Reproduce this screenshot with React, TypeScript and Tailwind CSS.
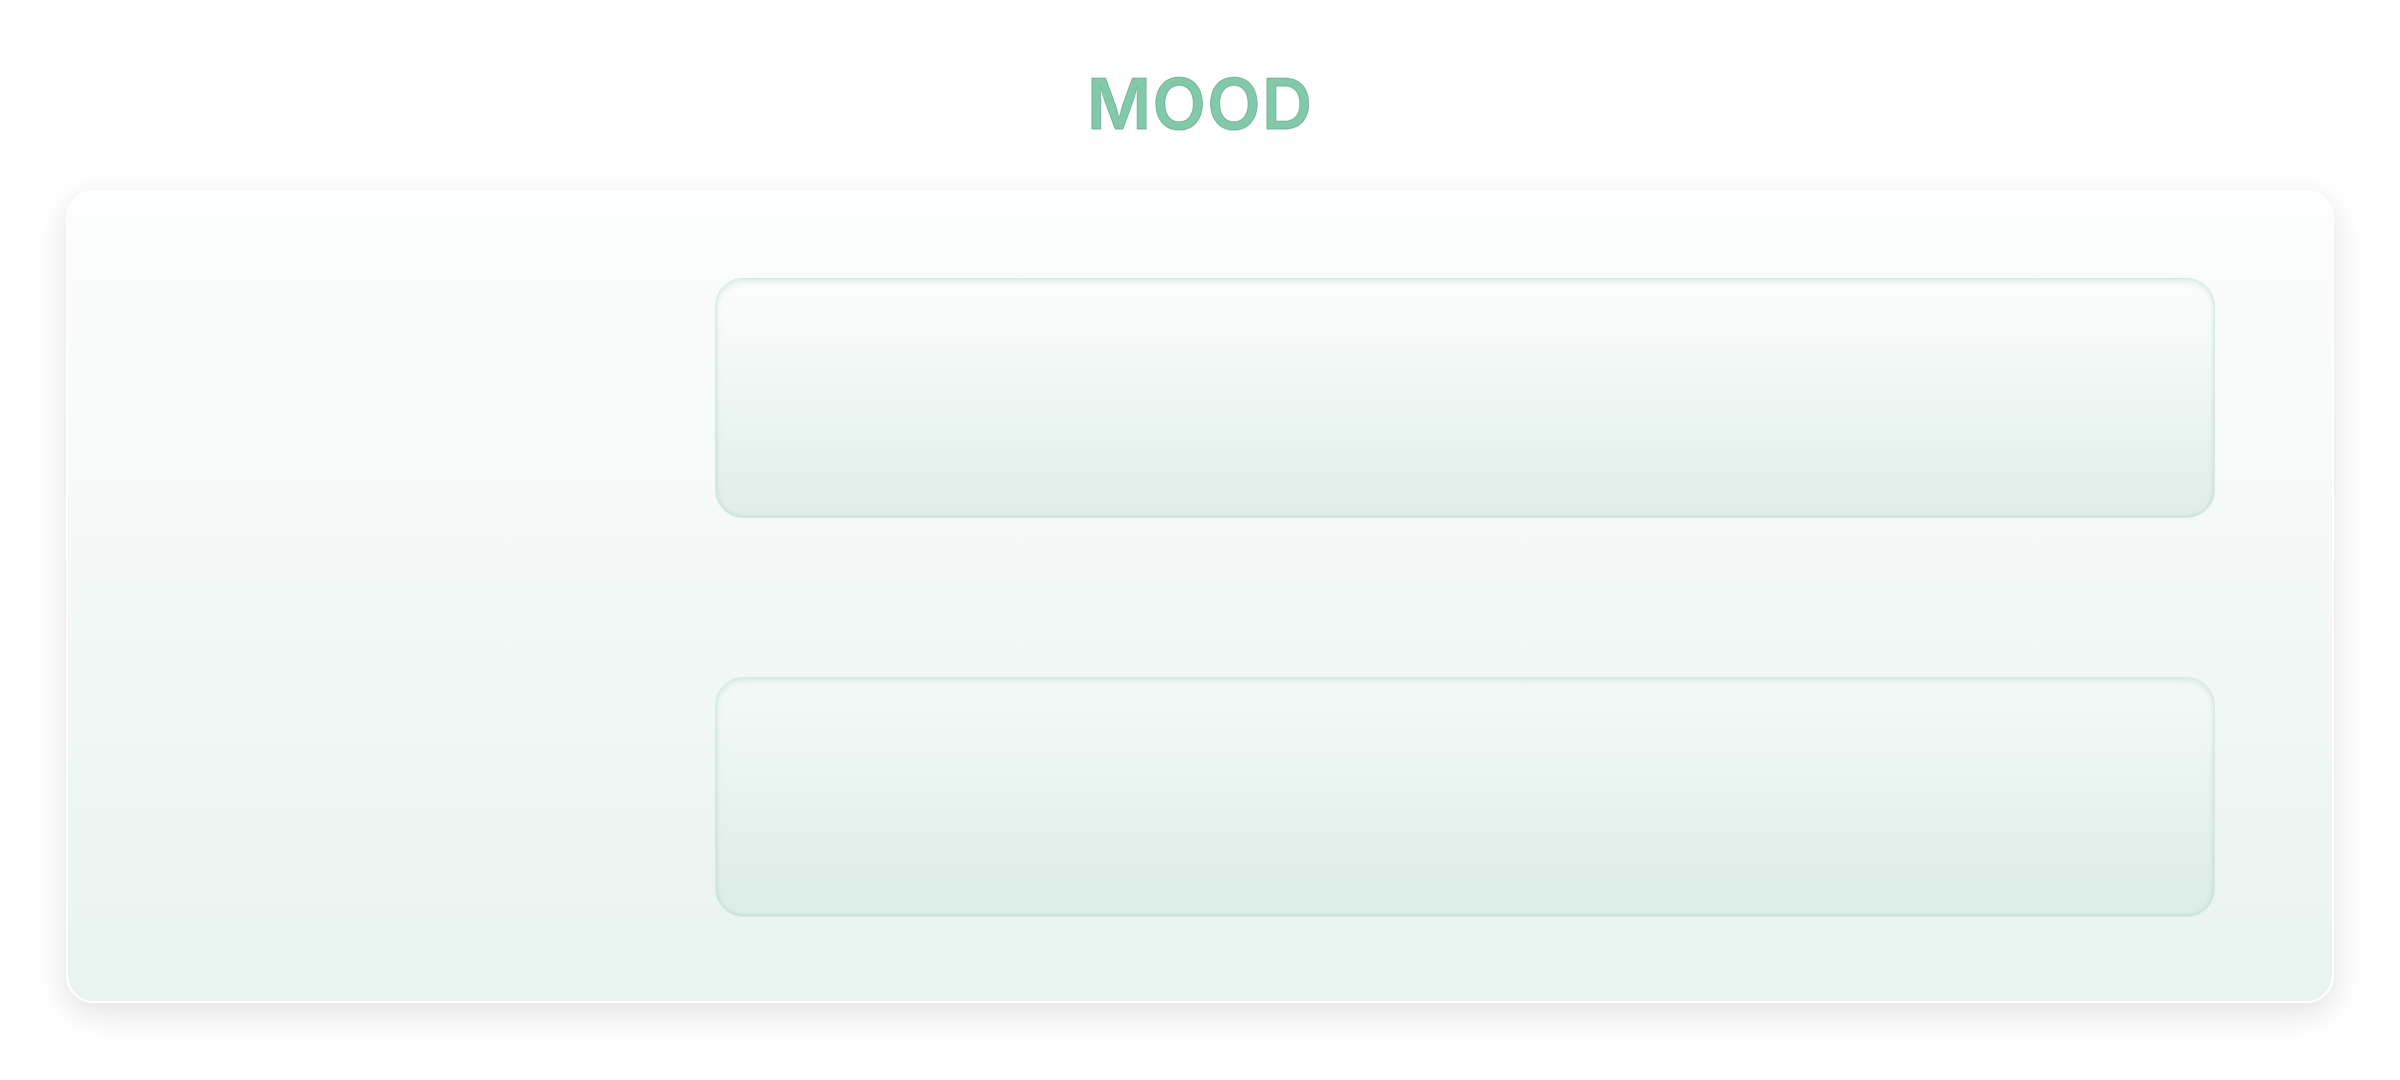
const Panel = ({ tone }: { tone: "light" | "deep" }) => (
  <div
    className={
      "h-[240px] rounded-[28px] border border-[#d6e9e3] shadow-[inset_0_3px_6px_rgba(120,170,155,0.22),inset_0_-1px_3px_rgba(120,170,155,0.18)] " +
      (tone === "light"
        ? "bg-gradient-to-b from-[#fdfefe] to-[#dfeee9]"
        : "bg-gradient-to-b from-[#f5faf9] to-[#dbece6]")
    }
  />
);

export default function App() {
  return (
    <div className="min-h-[1080px] w-full bg-white font-['Inter','Liberation_Sans',sans-serif]">
      {/* Title */}
      <div className="flex justify-center pt-[69px]">
        <h1 className="text-[70px] font-semibold leading-none tracking-[1px] text-[#82c9aa] [-webkit-text-stroke:1px_rgba(70,140,110,0.4)] [text-shadow:0_1px_1px_rgba(40,90,70,0.12)]">
          MOOD
        </h1>
      </div>

      {/* Card */}
      <div className="mx-[66px] mt-[51px] h-[813px] rounded-[28px] border-2 border-white bg-gradient-to-b from-[#fdfefe] to-[#e9f3f0] shadow-[0_10px_32px_rgba(0,0,0,0.12)]">
        <div className="flex h-full pt-[86px] pb-[84px] pl-[647px] pr-[117px]">
          <div className="flex flex-1 flex-col justify-between">
            <Panel tone="light" />
            <Panel tone="deep" />
          </div>
        </div>
      </div>
    </div>
  );
}
